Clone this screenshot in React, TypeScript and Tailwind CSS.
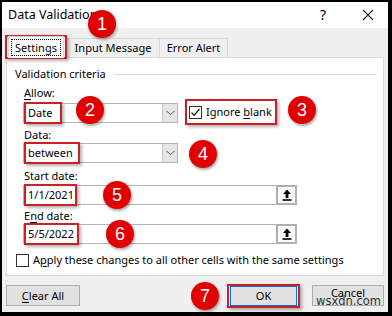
import type { ReactNode } from "react"

function Badge({ n, className }: { n: number; className: string }) {
  return (
    <div
      className={`absolute flex h-[28px] w-[28px] items-center justify-center rounded-full bg-[#e00000] font-['Liberation_Sans',sans-serif] text-[18px] leading-none text-white shadow-[1px_2px_3px_rgba(0,0,0,0.35)] ${className}`}
    >
      {n}
    </div>
  )
}

function Mark({ children, className = "" }: { children: ReactNode; className?: string }) {
  return (
    <span className="relative inline-flex">
      {children}
      <span
        className={`pointer-events-none absolute border-2 border-[#cc1f26] shadow-[2px_2px_3px_rgba(0,0,0,0.3)] ${className}`}
      />
    </span>
  )
}

function Check({ checked }: { checked?: boolean }) {
  return (
    <span className="flex h-[13px] w-[13px] items-center justify-center border border-[#333] bg-white">
      {checked && (
        <svg width="11" height="11" viewBox="0 0 11 11">
          <path d="M1.5 5.5 L4.2 8.2 L9.5 2" fill="none" stroke="#222" strokeWidth="1.3" />
        </svg>
      )}
    </span>
  )
}

function Combo({ value, w }: { value: ReactNode; w: string }) {
  return (
    <div className={`flex h-[20px] ${w} border border-[#b5b5b5] bg-white`}>
      <div className="flex flex-1 items-center pl-[4px]">{value}</div>
      <div className="flex w-[15px] items-center justify-center border-l border-[#c8c8c8] bg-[#e6e6e6]">
        <svg width="9" height="6" viewBox="0 0 9 6">
          <path d="M0.5 0.8 L4.5 4.8 L8.5 0.8" fill="none" stroke="#555" strokeWidth="1" />
        </svg>
      </div>
    </div>
  )
}

function RefInput({ value }: { value: ReactNode }) {
  return (
    <div className="flex h-[20px] w-[274px]">
      <div className="flex flex-1 items-center border border-r-0 border-[#b5b5b5] bg-white pl-[4px]">{value}</div>
      <div className="flex w-[21px] items-center justify-center border-2 border-[#b0b0b0] bg-[#fafafa]">
        <svg width="10" height="12" viewBox="0 0 10 12">
          <path d="M5 0.5 L9 5 L6.4 5 L6.4 9 L3.6 9 L3.6 5 L1 5 Z" fill="#000" />
          <rect x="0.5" y="10.2" width="9" height="1.6" fill="#000" />
        </svg>
      </div>
    </div>
  )
}

export default function App() {
  return (
    <div className="relative h-[316px] w-[392px] bg-black pb-[4px] pl-[2px] pr-[4px] pt-[2px] font-['Noto_Sans',sans-serif] text-[11px] leading-[16px] text-black">
      <div className="flex h-full flex-col bg-[#f0f0f0]">
        {/* title bar */}
        <div className="flex h-[26px] items-center bg-white pl-[6px] text-[12.5px]">
          <span>Data Validation</span>
          <span className="ml-auto mr-[36px] text-[14px]">?</span>
          <svg width="12" height="12" viewBox="0 0 12 12" className="mr-[14px]">
            <path d="M1 1 L11 11 M11 1 L1 11" stroke="#222" strokeWidth="1.1" />
          </svg>
        </div>

        <div className="flex flex-col px-[4px]">
          {/* tabs */}
          <div className="ml-[2px] mt-[8px] flex items-end">
            <Mark className="-inset-x-[3px] -bottom-[2px] -top-[1px]">
              <div className="relative z-10 -mb-px flex h-[22px] w-[56px] items-center justify-center border border-b-0 border-[#d9d9d9] bg-white">
                <span className="border border-dotted border-black px-[3px] leading-[15px]">Settings</span>
              </div>
            </Mark>
            <div className="ml-[2px] flex h-[19px] w-[94px] items-center justify-center border border-b-0 border-[#d9d9d9]">
              Input Message
            </div>
            <div className="flex h-[19px] w-[68px] items-center justify-center border border-b-0 border-l-0 border-[#d9d9d9]">
              Error Alert
            </div>
          </div>

          {/* panel */}
          <div className="flex h-[219px] flex-col border border-[#d9d9d9] bg-white">
            <div className="flex items-center pl-[8px] pr-[6px] pt-[8px]">
              <span>Validation criteria</span>
              <span className="ml-[8px] h-px flex-1 bg-[#dcdcdc]" />
            </div>

            <div className="flex flex-col pl-[16px]">
              <div className="ml-px mt-[3px]">
                <span className="underline underline-offset-2">A</span>llow:
              </div>
              <div className="mt-[2px] flex items-center">
                <Combo
                  w="w-[155px]"
                  value={
                    <Mark className="-inset-x-[4px] -inset-y-[3px]">
                      <span className="w-[30px]">Date</span>
                    </Mark>
                  }
                />
                <div className="ml-[11px]">
                  <Mark className="-bottom-[5px] -left-[4px] -right-[5px] -top-[5px]">
                    <span className="flex items-center gap-[4px]">
                      <Check checked />
                      <span>
                        Ignore <span className="underline underline-offset-2">b</span>lank
                      </span>
                    </span>
                  </Mark>
                </div>
              </div>

              <div className="ml-px mt-[4px]">Data:</div>
              <Combo
                w="w-[155px]"
                value={
                  <Mark className="-inset-x-[4px] -inset-y-[3px]">
                    <span className="w-[48px]">between</span>
                  </Mark>
                }
              />

              <div className="ml-px mt-[5px]">Start date:</div>
              <div className="mt-px">
                <RefInput
                  value={
                    <Mark className="-inset-x-[4px] -inset-y-[3px]">
                      <span className="w-[45px]">1/1/2021</span>
                    </Mark>
                  }
                />
              </div>

              <div className="ml-px mt-[3px]">
                E<span className="underline underline-offset-2">n</span>d date:
              </div>
              <RefInput
                value={
                  <Mark className="-inset-x-[4px] -inset-y-[3px]">
                    <span className="w-[47px]">5/5/2022</span>
                  </Mark>
                }
              />
            </div>

            <div className="mt-[8px] flex items-center gap-[4px] pl-[9px]">
              <Check />
              <span>
                A<span className="underline underline-offset-2">p</span>ply these changes to all other cells with the same settings
              </span>
            </div>
          </div>

          {/* buttons */}
          <div className="mt-[9px] flex items-center">
            <div className="flex h-[21px] w-[74px] items-center justify-center border border-[#adadad] bg-[#e1e1e1]">
              <span>
                <span className="underline underline-offset-2">C</span>lear All
              </span>
            </div>
            <div className="ml-auto">
              <Mark className="-inset-x-[3px] -inset-y-[2px]">
                <div className="flex h-[20px] w-[67px] items-center justify-center border border-[#0078d7] bg-[#e1e1e1]">
                  OK
                </div>
              </Mark>
            </div>
            <div className="relative ml-[15px] flex h-[21px] w-[72px] items-center justify-center border border-[#adadad] bg-[#e1e1e1]">
              <span className="-mt-[5px] leading-[12px]">Cancel</span>
              <span className="absolute right-[2px] top-[10px] font-['DejaVu_Sans',sans-serif] text-[11.5px] leading-[11px] text-[#333]">
                wsxdn.com
              </span>
            </div>
          </div>
        </div>
      </div>

      <Badge n={1} className="left-[88px] top-[10px]" />
      <Badge n={2} className="left-[76px] top-[96px]" />
      <Badge n={3} className="left-[288px] top-[96px]" />
      <Badge n={4} className="left-[189px] top-[140px]" />
      <Badge n={5} className="left-[103px] top-[181px]" />
      <Badge n={6} className="left-[106px] top-[220px]" />
      <Badge n={7} className="left-[191px] top-[282px]" />
    </div>
  )
}
